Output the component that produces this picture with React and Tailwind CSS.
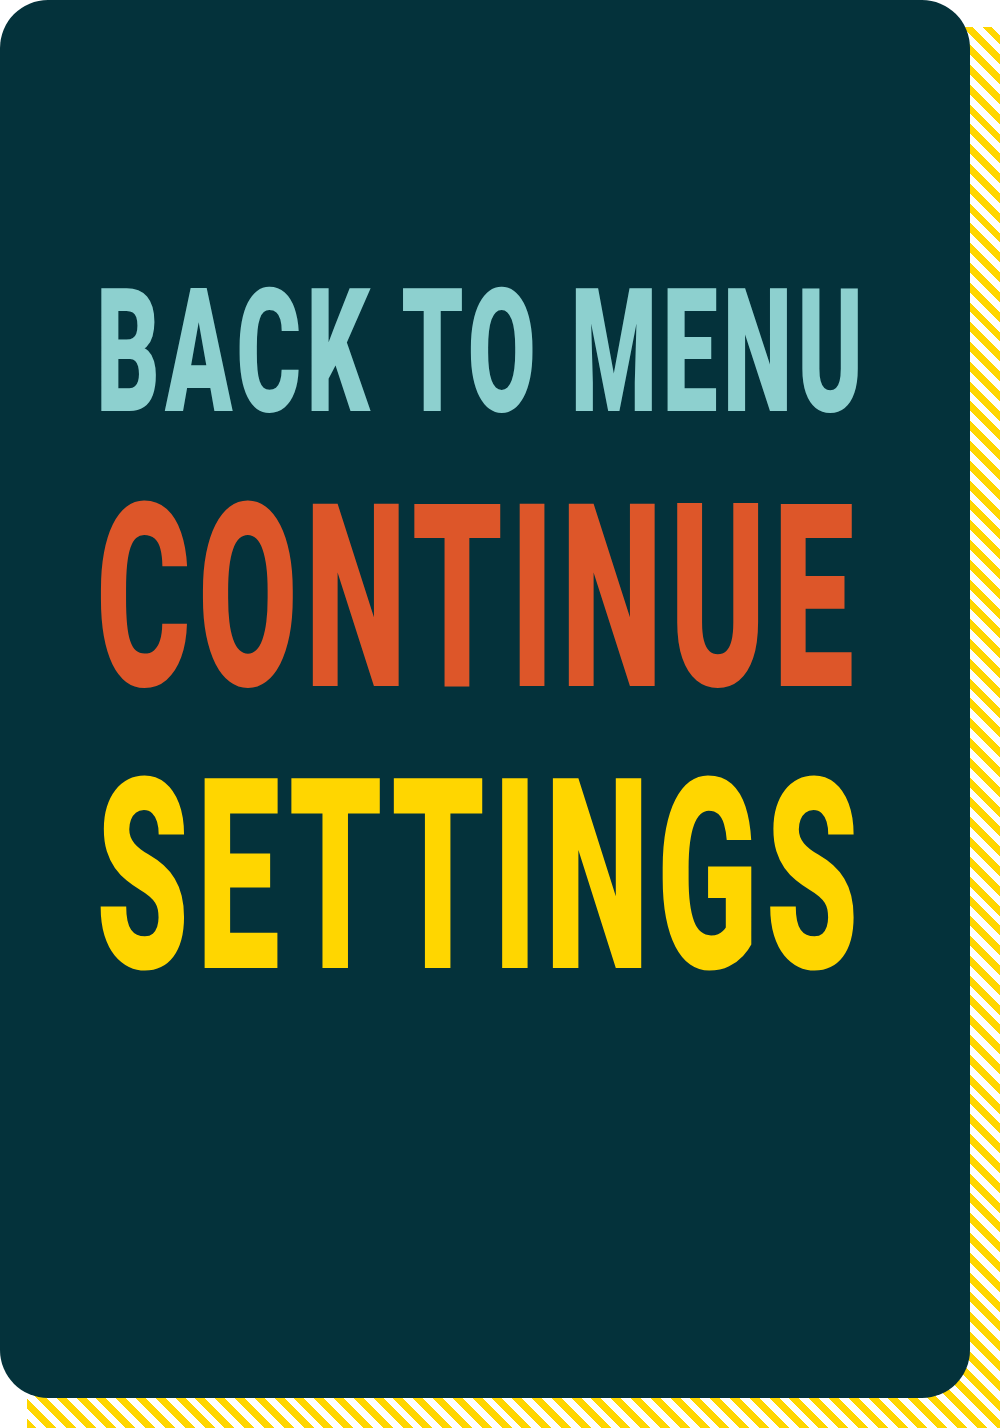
import { useLayoutEffect, useRef, useState } from "react";

const MENU_ITEMS = [
  { label: "BACK TO MENU", color: "text-[#8dd0cf]", size: "text-[173px]", gap: "mt-0", width: 772 },
  { label: "CONTINUE", color: "text-[#dd5629]", size: "text-[256px]", gap: "mt-[32px]", width: 765 },
  { label: "SETTINGS", color: "text-[#ffd600]", size: "text-[267px]", gap: "mt-[16px]", width: 770 },
];

// squeeze a line of text so it fills the given width
function FitLine({ label, color, size, gap, width }) {
  const textRef = useRef(null);
  const [scale, setScale] = useState(1);

  useLayoutEffect(() => {
    const natural = textRef.current?.scrollWidth;
    if (natural) setScale(width / natural);
  }, [width]);

  return (
    <div className={`${gap} h-fit`}>
      <button
        type="button"
        ref={textRef}
        className={`${color} ${size} block whitespace-nowrap font-black uppercase leading-none tracking-[0.05em] origin-left cursor-pointer`}
        style={{ transform: `scaleX(${scale})`, fontFamily: "Roboto, 'Liberation Sans', sans-serif" }}
      >
        {label}
      </button>
    </div>
  );
}

export default function App() {
  return (
    <div className="min-h-[1428px] w-[1000px] bg-white pl-[27px] pt-[27px]">
      <div className="flow-root h-[1401px] w-[973px] bg-[repeating-linear-gradient(45deg,#ffd600_0_7px,#ffffff_7px_14px)]">
        <div className="-ml-[27px] -mt-[27px] flex h-[1398px] w-[970px] flex-col rounded-[48px] bg-[#04323b] pl-[96px] pt-[266px]">
          {MENU_ITEMS.map((item) => (
            <FitLine key={item.label} {...item} />
          ))}
        </div>
      </div>
    </div>
  );
}
